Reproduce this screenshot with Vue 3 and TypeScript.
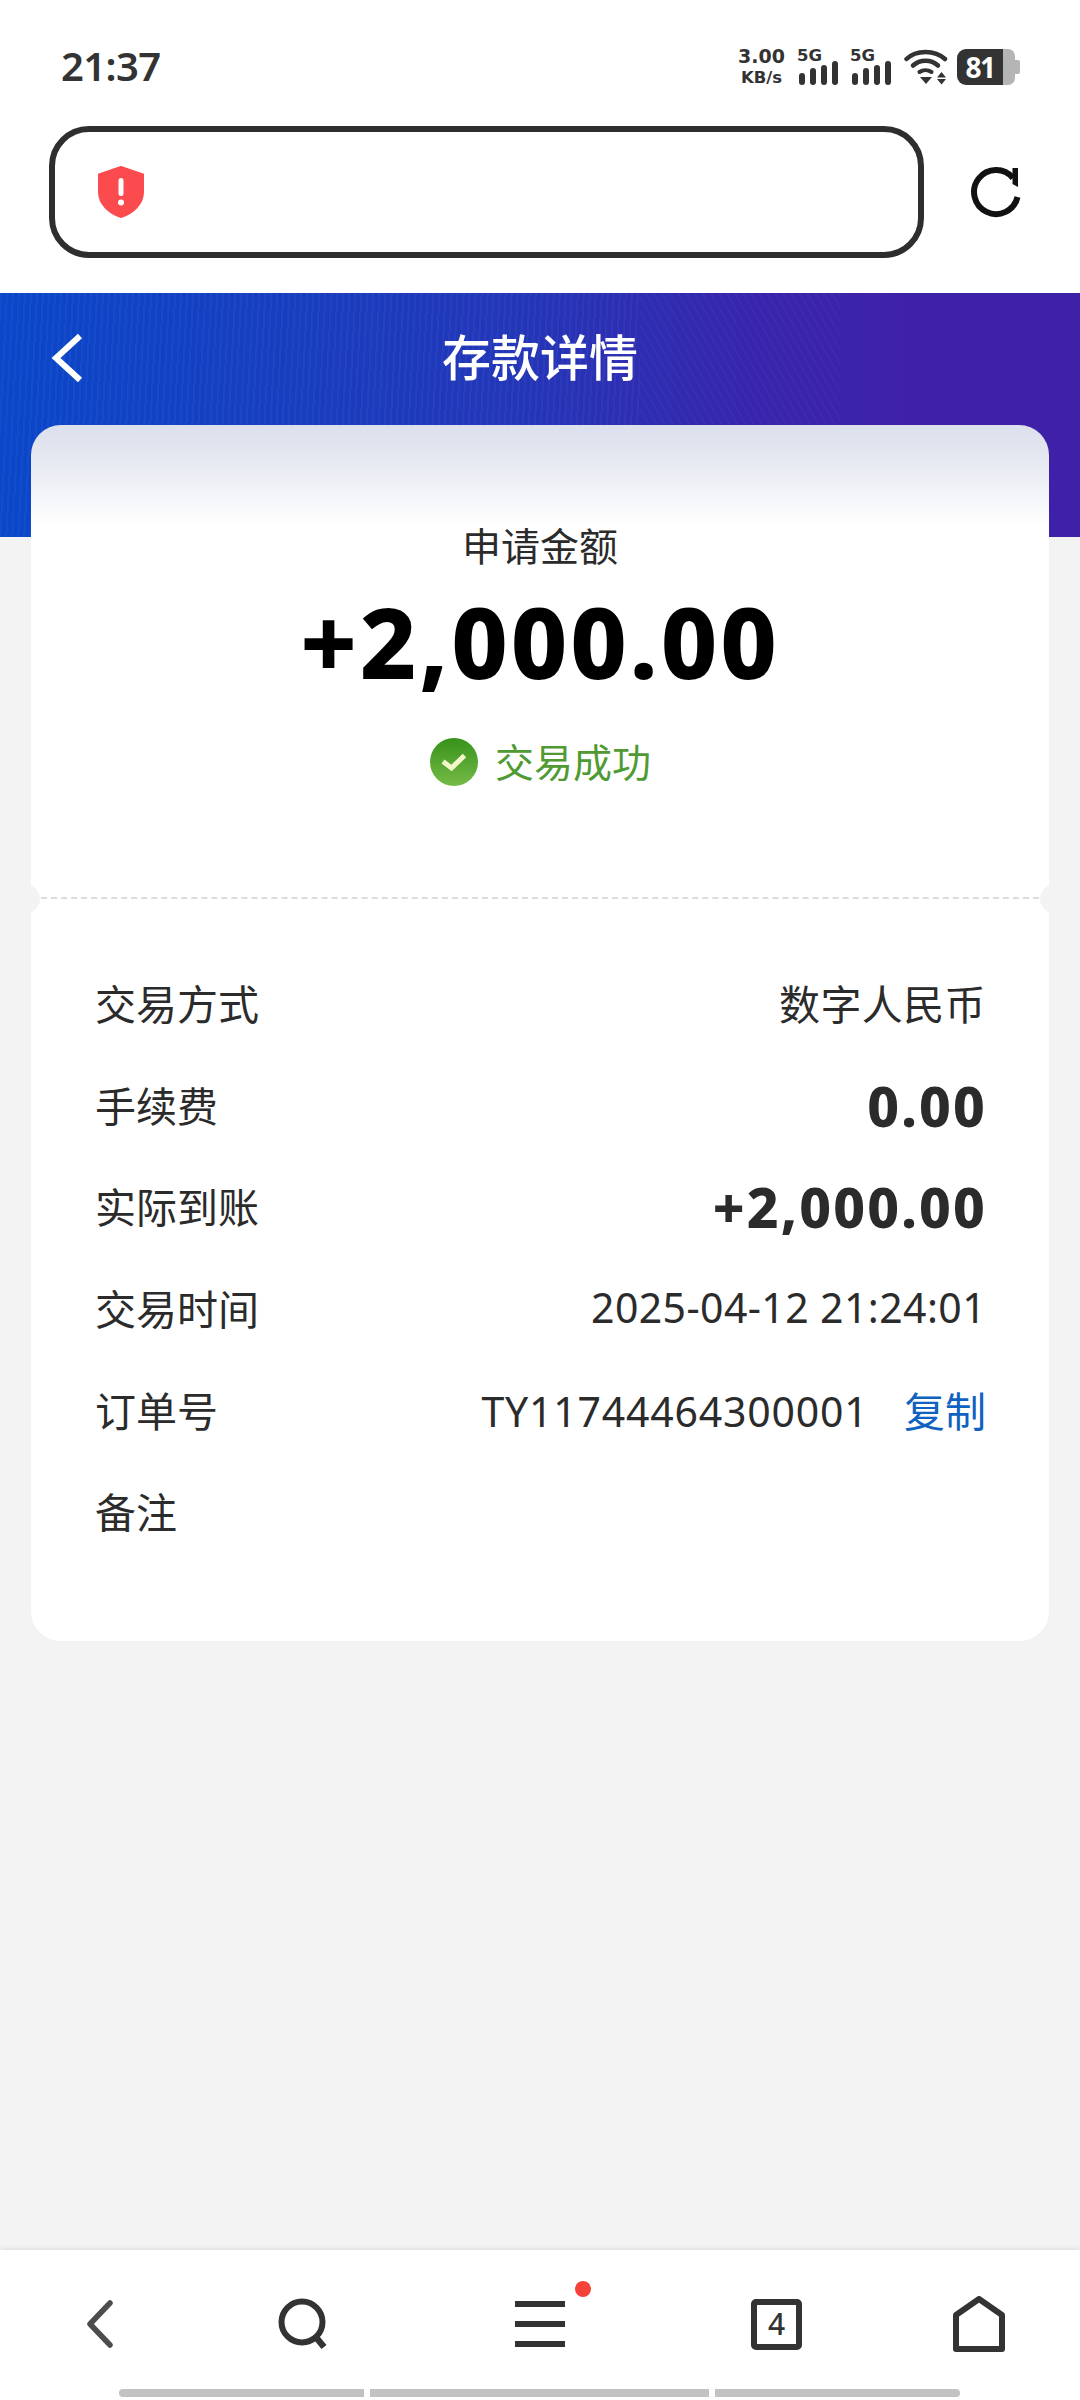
<template>
  <div class="page">
    <div class="status-bar">
      <span class="time">21:37</span>
      <div class="status-icons">
        <div class="speed"><span>3.00</span><span>KB/s</span></div>
        <div v-for="n in 2" :key="n" class="signal">
          <span class="sig-label">5G</span>
          <div class="bars">
            <i v-for="h in barHeights" :key="h" :style="{ height: h + 'px' }"></i>
          </div>
        </div>
        <svg class="wifi" width="44" height="36" viewBox="0 0 44 36" fill="none">
          <path d="M2.500 10C12 0.500 31 0.500 41 10" stroke="#333" stroke-width="4.500" stroke-linecap="round" />
          <path d="M9 16.500C16 10 27 10 34 16.500" stroke="#333" stroke-width="4.500" stroke-linecap="round" />
          <path d="M15.500 23C19 20.500 24 20.500 27.500 23" stroke="#333" stroke-width="4" stroke-linecap="round" />
          <path d="M16 28H28L22 35Z" fill="#333" />
          <path d="M33 28.500L37.500 23L42 28.500ZM33 30H42L37.500 35.500Z" fill="#333" />
        </svg>
        <div class="battery">
          <div class="batt-fill">81</div>
          <div class="batt-rest"></div>
          <div class="batt-tip"></div>
        </div>
      </div>
    </div>

    <div class="address-row">
      <div class="address-box">
        <svg width="48" height="52" viewBox="0 0 48 52">
          <path d="M24 1L46 8.500V26C46 38 36 47 24 51C12 47 2 38 2 26V8.500Z" fill="#fb4b4e" stroke="#fb4b4e" stroke-width="2" stroke-linejoin="round" />
          <rect x="21.500" y="12" width="5" height="18" rx="2.500" fill="#fff" />
          <circle cx="24" cy="36.500" r="3" fill="#fff" />
        </svg>
      </div>
      <svg class="refresh" width="54" height="54" viewBox="0 0 54 54" fill="none">
        <path d="M48.500 32A22 22 0 1 1 44 13" stroke="#111" stroke-width="6" />
        <path d="M43.500 3H49V22L43.500 19Z" fill="#111" />
      </svg>
    </div>

    <header class="top-header">
      <svg class="back" width="34" height="50" viewBox="0 0 34 50" fill="none">
        <path d="M30 3L6 25L30 47" stroke="#fff" stroke-width="6" />
      </svg>
      <h1>存款详情</h1>
    </header>

    <main class="content">
      <section class="card summary">
        <div class="apply-label">申请金额</div>
        <div class="amount">+2,000.00</div>
        <div class="state">
          <svg width="50" height="50" viewBox="0 0 50 50" fill="none">
            <defs>
              <linearGradient id="okFill" x1="0" y1="0" x2="0" y2="1">
                <stop offset="0" stop-color="#36921a" />
                <stop offset="1" stop-color="#76bb48" />
              </linearGradient>
            </defs>
            <circle cx="25" cy="25" r="24" fill="url(#okFill)" />
            <path d="M14 24.500L22.500 31L35.500 18.500" stroke="#f2f9c8" stroke-width="5" />
          </svg>
          <span>交易成功</span>
        </div>
      </section>

      <div class="tear">
        <i class="notch left"></i>
        <i class="notch right"></i>
      </div>

      <section class="card details">
        <div v-for="row in rows" :key="row.label" class="row">
          <span class="label">{{ row.label }}</span>
          <span class="value" :class="{ strong: row.strong, order: row.copy }">
            {{ row.value }}
            <a v-if="row.copy" class="copy">复制</a>
          </span>
        </div>
      </section>
    </main>

    <nav class="bottom-nav">
      <svg class="nav-back" width="28" height="48" viewBox="0 0 28 48" fill="none">
        <path d="M24 3L4 24L24 45" stroke="#4d4d4d" stroke-width="5.500" stroke-linecap="round" stroke-linejoin="round" />
      </svg>
      <svg class="nav-search" width="50" height="52" viewBox="0 0 50 52" fill="none">
        <circle cx="24" cy="24" r="20.500" stroke="#333" stroke-width="6" />
        <path d="M36.500 37.500L46 49" stroke="#333" stroke-width="6.500" />
      </svg>
      <div class="menu-icon">
        <i></i><i></i><i></i>
        <b class="dot"></b>
      </div>
      <div class="tabs-icon">4</div>
      <svg class="nav-home" width="52" height="56" viewBox="0 0 52 56" fill="none">
        <path d="M3 19L26 3L49 19V53H3Z" stroke="#333" stroke-width="6" stroke-linejoin="round" />
      </svg>
    </nav>
    <div class="home-indicator">
      <i class="seg-a"></i><i class="seg-b"></i><i class="seg-c"></i>
    </div>
  </div>
</template>

<script setup lang="ts">
interface DetailRow {
  label: string
  value: string
  strong?: boolean
  copy?: boolean
}

const barHeights = [12, 17, 20, 24]

const rows: DetailRow[] = [
  { label: '交易方式', value: '数字人民币' },
  { label: '手续费', value: '0.00', strong: true },
  { label: '实际到账', value: '+2,000.00', strong: true },
  { label: '交易时间', value: '2025-04-12 21:24:01' },
  { label: '订单号', value: 'TY11744464300001', copy: true },
  { label: '备注', value: '' },
]
</script>

<style>
html,
body {
  margin: 0;
  background: #f3f3f3;
}
</style>

<style scoped>
.page {
  width: 1080px;
  height: 2400px;
  display: flex;
  flex-direction: column;
  background: #f3f3f3;
  overflow: hidden;
  font-family: "Noto Sans", "Noto Sans CJK SC", sans-serif;
  color: #2b2b2b;
}

.status-bar {
  height: 126px;
  box-sizing: border-box;
  padding: 44px 60px 0 61px;
  background: #fff;
  display: flex;
  justify-content: space-between;
  align-items: flex-start;
}

.time {
  font-size: 40px;
  font-weight: 600;
  line-height: 44px;
  letter-spacing: -0.600px;
  color: #333;
}

.status-icons {
  display: flex;
  align-items: flex-start;
  height: 36px;
  margin-top: 5px;
}

.speed {
  display: flex;
  flex-direction: column;
  align-items: center;
  width: 47px;
  font-family: "DejaVu Sans", sans-serif;
  font-size: 16.500px;
  font-weight: 700;
  line-height: 22px;
  margin-top: -4px;
  color: #333;
}

.speed span:first-child {
  font-size: 19px;
}

.signal {
  position: relative;
  width: 41px;
  height: 36px;
  margin-left: 14px;
}

.signal + .signal {
  margin-left: 12px;
}

.sig-label {
  position: absolute;
  left: -2px;
  top: -3px;
  font-family: "DejaVu Sans", sans-serif;
  font-size: 16.500px;
  font-weight: 700;
  line-height: 20px;
  color: #333;
}

.bars {
  position: absolute;
  left: 0;
  bottom: 0;
  display: flex;
  align-items: flex-end;
  gap: 5px;
}

.bars i {
  width: 6px;
  border-radius: 3px;
  background: #333;
}

.wifi {
  margin-left: 11px;
}

.battery {
  width: 63px;
  height: 36px;
  margin-left: 9px;
  display: flex;
  align-items: stretch;
}

.batt-fill {
  width: 46px;
  background: #333;
  border-radius: 9px 0 0 9px;
  color: #fff;
  font-size: 28px;
  font-weight: 700;
  line-height: 36px;
  letter-spacing: -1.500px;
  text-align: center;
}

.batt-rest {
  width: 12px;
  background: #b5b5b5;
  border-radius: 0 7px 7px 0;
}

.batt-tip {
  width: 5px;
  height: 14px;
  margin-top: 11px;
  background: #b5b5b5;
  border-radius: 0 2px 2px 0;
}

.address-row {
  height: 167px;
  padding: 0 0 0 49px;
  background: #fff;
  display: flex;
  align-items: flex-start;
}

.address-box {
  width: 875px;
  height: 132px;
  box-sizing: border-box;
  border: 6px solid #2e2e2e;
  border-radius: 40px;
  display: flex;
  align-items: center;
  padding-left: 42px;
}

.refresh {
  margin: 39px 0 0 45px;
}

.top-header {
  height: 244px;
  flex-shrink: 0;
  display: flex;
  align-items: flex-start;
  justify-content: center;
  position: relative;
  background:
    repeating-linear-gradient(93deg, rgba(255, 255, 255, 0.035) 0 2px, transparent 2px 6px) 0 0 / 640px 100% no-repeat,
    repeating-linear-gradient(60deg, rgba(255, 255, 255, 0.025) 0 2px, transparent 2px 7px) 640px 0 / 200px 100% no-repeat,
    linear-gradient(90deg, #0a47c9 0%, #2336b8 48%, #3825ad 70%, #3f21a9 85%, #3f21a9 100%);
}

.top-header h1 {
  margin: 36px 0 0;
  font-size: 49px;
  font-weight: 500;
  line-height: 56px;
  color: #fff;
}

.back {
  position: absolute;
  left: 50px;
  top: 40px;
}

.content {
  flex: 1;
  margin-top: -112px;
  padding: 0 31px;
  position: relative;
}

.card {
  background: #fff;
}

.summary {
  height: 472px;
  box-sizing: border-box;
  border-radius: 30px 30px 0 0;
  padding-top: 98px;
  display: flex;
  flex-direction: column;
  align-items: center;
  background: linear-gradient(180deg, #dce0ed 0, #e4e7f0 30px, #fff 100px);
}

.apply-label {
  font-size: 39px;
  line-height: 46px;
}

.amount {
  margin-top: 16px;
  font-size: 98px;
  font-weight: 800;
  line-height: 112px;
  letter-spacing: 2.900px;
  color: #000;
}

.state {
  margin-top: 40px;
  display: flex;
  align-items: center;
  gap: 16px;
  font-size: 39px;
  line-height: 50px;
  color: #4f9a33;
}

.tear {
  height: 2px;
  position: relative;
  background: #fff;
  border-top: 2px dashed #dcdcdc;
  box-sizing: border-box;
}

.notch {
  position: absolute;
  top: -14px;
  width: 28px;
  height: 28px;
  border-radius: 50%;
  background: #f3f3f3;
}

.notch.left {
  left: -19px;
}

.notch.right {
  right: -19px;
}

.details {
  height: 742px;
  box-sizing: border-box;
  border-radius: 0 0 30px 30px;
  padding: 52px 63px 0 64px;
}

.row {
  height: 101.700px;
  display: flex;
  justify-content: space-between;
  align-items: center;
  font-size: 41px;
  color: #2b2b2b;
}

.value {
  letter-spacing: 0.400px;
}

.value.order {
  letter-spacing: 0.800px;
}

.value.strong {
  font-size: 55px;
  font-weight: 800;
  line-height: 60px;
  letter-spacing: 2.200px;
  margin: 4px -1px 0 0;
}

.copy {
  margin-left: 24px;
  letter-spacing: 0;
  color: #0f62c0;
}

.bottom-nav {
  height: 130px;
  box-sizing: border-box;
  flex-shrink: 0;
  display: flex;
  align-items: center;
  padding: 18px 0 0 86px;
  background: #fff;
  box-shadow: 0 -1px 5px rgba(0, 0, 0, 0.1);
  position: relative;
}

.nav-search {
  margin-left: 164px;
}

.menu-icon {
  position: relative;
  width: 50px;
  height: 46px;
  margin-left: 187px;
  display: flex;
  flex-direction: column;
  justify-content: space-between;
}

.menu-icon i {
  height: 6px;
  background: #333;
}

.dot {
  position: absolute;
  right: -26px;
  top: -20px;
  width: 16px;
  height: 16px;
  border-radius: 50%;
  background: #f4423a;
}

.tabs-icon {
  width: 51px;
  height: 51px;
  margin-left: 186px;
  box-sizing: border-box;
  border: 6px solid #333;
  border-radius: 5px;
  font-size: 30px;
  font-weight: 500;
  line-height: 38px;
  text-align: center;
  color: #333;
}

.nav-home {
  margin-left: 151px;
}

.home-indicator {
  height: 20px;
  flex-shrink: 0;
  background: #fff;
  display: flex;
  padding-left: 119px;
  gap: 6px;
  position: relative;
}

.home-indicator i {
  height: 8px;
  margin-top: 9px;
  background: #c2c2c2;
}

.seg-a {
  width: 245px;
  border-radius: 4px 0 0 4px;
}

.seg-b {
  width: 339px;
}

.seg-c {
  width: 245px;
  border-radius: 0 4px 4px 0;
}
</style>
